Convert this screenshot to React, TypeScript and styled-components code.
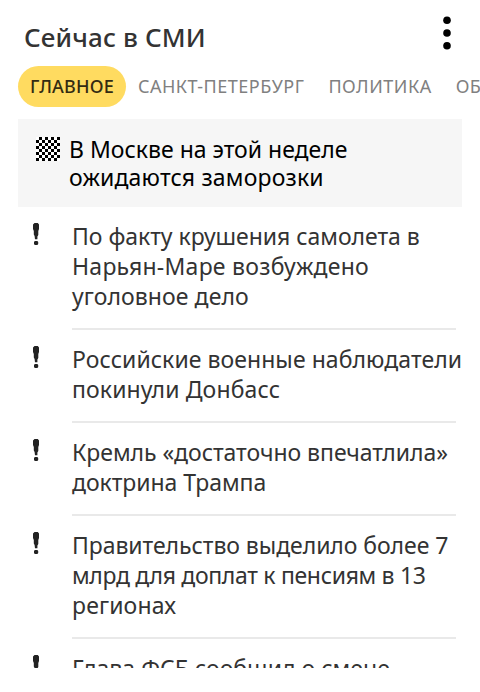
import React from 'react';
import styled, { createGlobalStyle } from 'styled-components';

const GlobalStyle = createGlobalStyle`
  * { box-sizing: border-box; }
  body { margin: 0; background: #fff; overflow: hidden; }
`;

const Widget = styled.main`
  display: flex;
  flex-direction: column;
  width: 480px;
  height: 668px;
  overflow: hidden;
  font-family: 'Noto Sans', sans-serif;
  color: #333;
`;

const Header = styled.header`
  display: flex;
  justify-content: space-between;
  flex: none;
  height: 66px;
  padding: 16px 27px 0 24px;
`;

const Title = styled.h1`
  margin: 0;
  font-size: 26px;
  line-height: 42px;
  font-weight: 500;
  letter-spacing: 0.14px;
`;

const MenuButton = styled.button`
  width: 12px;
  height: 36px;
  padding: 0;
  border: 0;
  background: none;
`;

const Tabs = styled.nav`
  display: flex;
  flex: none;
  width: 480px;
  height: 41px;
  margin-bottom: 12px;
  padding-left: 18px;
  overflow: hidden;
`;

const Tab = styled.a<{ $active?: boolean }>`
  flex: none;
  padding: 0 12px;
  border-radius: 21px;
  font-size: 18px;
  line-height: 41px;
  white-space: nowrap;
  font-weight: ${(p) => (p.$active ? 500 : 400)};
  letter-spacing: ${(p) => (p.$active ? 0.18 : 0.5)}px;
  color: ${(p) => (p.$active ? '#332b12' : '#808080')};
  background: ${(p) => (p.$active ? '#ffdb60' : 'transparent')};
`;

const Highlight = styled.section`
  display: flex;
  flex: none;
  width: 444px;
  height: 88px;
  margin-left: 18px;
  padding: 16px 18px;
  gap: 9px;
  background: #f6f6f6;
  color: #000;
`;

const HighlightIcon = styled.svg`
  flex: none;
  margin-top: 2px;
`;

const HighlightText = styled.div`
  font-size: 23px;
  line-height: 28px;
`;

const List = styled.ul`
  flex: none;
  margin: 0;
  padding: 0 0 0 28px;
  list-style: none;
`;

const Item = styled.li`
  display: flex;
`;

const ItemIcon = styled.svg`
  flex: none;
  margin: 16px 28px 0 0;
`;

const ItemBody = styled.div`
  width: 384px;
  padding: 14px 0 17px;
  border-bottom: 2px solid #e9e9e9;
  font-size: 23px;
  line-height: 30px;
`;

const Line = styled.span<{ $track: number }>`
  display: block;
  white-space: nowrap;
  letter-spacing: ${(p) => p.$track}px;
`;

type TextLine = [text: string, track: number];

const tabs = ['ГЛАВНОЕ', 'САНКТ-ПЕТЕРБУРГ', 'ПОЛИТИКА', 'ОБЩЕСТВО'];

const topStory: TextLine[] = [
  ['В Москве на этой неделе', 0],
  ['ожидаются заморозки', 0.18],
];

const stories: TextLine[][] = [
  [['По факту крушения самолета в', -0.04], ['Нарьян-Маре возбуждено', 0.25], ['уголовное дело', 0.08]],
  [['Российские военные наблюдатели', 0.06], ['покинули Донбасс', 0.13]],
  [['Кремль «достаточно впечатлила»', -0.04], ['доктрина Трампа', -0.05]],
  [['Правительство выделило более 7', -0.06], ['млрд для доплат к пенсиям в 13', -0.32], ['регионах', 0.15]],
  [['Глава ФСБ сообщил о смене', 0.02]],
];

const cells = Array.from({ length: 64 }, (_, i) => ({ x: i % 8, y: Math.floor(i / 8) }));

const renderLines = (lines: TextLine[]) =>
  lines.map(([text, track]) => <Line key={text} $track={track}>{text}</Line>);

export default function App() {
  return (
    <>
      <GlobalStyle />
      <Widget>
        <Header>
          <Title>Сейчас в СМИ</Title>
          <MenuButton aria-label="Меню">
            <svg width="12" height="36" viewBox="0 0 12 36" display="block">
              <circle cx="6" cy="4.2" r="3.8" />
              <circle cx="6" cy="17" r="3.8" />
              <circle cx="6" cy="29.8" r="3.8" />
            </svg>
          </MenuButton>
        </Header>
        <Tabs>
          {tabs.map((name, i) => <Tab key={name} $active={i === 0}>{name}</Tab>)}
        </Tabs>
        <Highlight>
          <HighlightIcon width="24" height="24" viewBox="0 0 8 8" shapeRendering="crispEdges">
            <rect width="8" height="8" fill="#fff" />
            {cells.filter((c) => (c.x + c.y) % 2 === 1).map((c) => (
              <rect key={`${c.x}-${c.y}`} x={c.x} y={c.y} width="1" height="1" />
            ))}
          </HighlightIcon>
          <HighlightText>{renderLines(topStory)}</HighlightText>
        </Highlight>
        <List>
          {stories.map((lines) => (
            <Item key={lines[0][0]}>
              <ItemIcon width="16" height="24" viewBox="0 0 16 24" fill="#222">
                <path d="M6.5 0 H9.8 L11 1.5 V6 L10.3 8 V12 L9.4 13.5 V16.3 H7 L6.6 13 L5.8 11.5 V8 L5 6 V1.5 Z" />
                <path d="M6.8 18 H9.4 L10.2 19 V21 L9.4 22 H6.8 L6 21 V19 Z" />
              </ItemIcon>
              <ItemBody>{renderLines(lines)}</ItemBody>
            </Item>
          ))}
        </List>
      </Widget>
    </>
  );
}
